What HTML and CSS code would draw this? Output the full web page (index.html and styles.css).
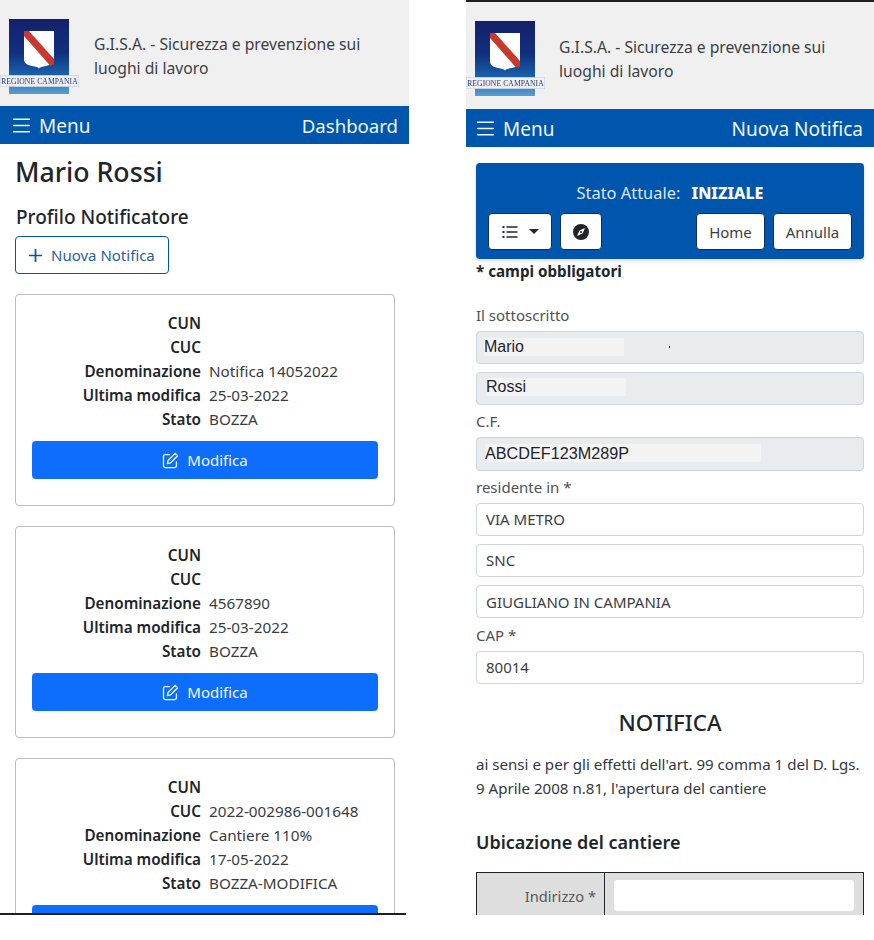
FILE: index.html
```html
<!DOCTYPE html>
<html lang="it">
<head>
<meta charset="utf-8">
<title>G.I.S.A.</title>
<link rel="stylesheet" href="styles.css">
</head>
<body>
<svg class="defs" width="0" height="0" aria-hidden="true">
  <defs>
    <linearGradient id="sky" x1="0" y1="0" x2="0" y2="1">
      <stop offset="0" stop-color="#15206a"/>
      <stop offset="0.45" stop-color="#11307f"/>
      <stop offset="0.75" stop-color="#1a62ad"/>
      <stop offset="1" stop-color="#5a9fce"/>
    </linearGradient>
    <symbol id="logo" viewBox="0 0 80 76">
      <rect x="9" y="0" width="60" height="75" fill="url(#sky)"/>
      <path d="M24 12H54V40C54 44 51 46 46 47C42 47.500 40 48 39 49.500C38 48 36 47.500 32 47C27 46 24 44 24 40Z" fill="#fff"/>
      <path d="M24 12H29L54 40V45.500L50 46.500L24 17Z" fill="#c8382f"/>
      <rect x="0.300" y="56.300" width="78.400" height="11.400" fill="#eef0f5" stroke="#c8d0de" stroke-width="0.600"/>
      <text x="39.500" y="64.800" text-anchor="middle" class="logo-text">REGIONE CAMPANIA</text>
    </symbol>
    <symbol id="menu-ic" viewBox="0 0 16 16">
      <path fill="currentColor" fill-rule="evenodd" d="M2.5 12a.5.5 0 0 1 .5-.5h10a.5.5 0 0 1 0 1H3a.5.5 0 0 1-.5-.5zm0-4a.5.5 0 0 1 .5-.5h10a.5.5 0 0 1 0 1H3a.5.5 0 0 1-.5-.5zm0-4a.5.5 0 0 1 .5-.5h10a.5.5 0 0 1 0 1H3a.5.5 0 0 1-.5-.5z"/>
    </symbol>
    <symbol id="edit-ic" viewBox="0 0 16 16">
      <path fill="none" stroke="currentColor" stroke-width="1.200" stroke-linecap="round" d="M13.600 9.200V13A1.600 1.600 0 0 1 12 14.600H3A1.600 1.600 0 0 1 1.400 13V4A1.600 1.600 0 0 1 3 2.400H7.200"/>
      <path fill="none" stroke="currentColor" stroke-width="1.200" stroke-linejoin="round" d="M12.400 1.300L14.700 3.600L8 10.300L5 11L5.700 8Z"/>
    </symbol>
  </defs>
</svg>

<main class="screen screen-left">
  <header class="brand">
    <svg class="logo"><use href="#logo"/></svg>
    <p class="brand-title">G.I.S.A. - Sicurezza e prevenzione sui luoghi di lavoro</p>
  </header>
  <nav class="navbar">
    <span class="nav-menu"><svg class="nav-icon"><use href="#menu-ic"/></svg>Menu</span>
    <span class="nav-title">Dashboard</span>
  </nav>
  <section class="dashboard">
    <h1 class="user-name">Mario Rossi</h1>
    <h2 class="profile">Profilo Notificatore</h2>
    <button class="btn-new" type="button">
      <svg class="plus" viewBox="0 0 12 12"><path d="M6 0V12M0 6H12" stroke="currentColor" stroke-width="1.600" fill="none"/></svg>
      Nuova Notifica
    </button>

    <article class="card">
      <dl class="facts">
        <dt>CUN</dt><dd></dd>
        <dt>CUC</dt><dd></dd>
        <dt>Denominazione</dt><dd>Notifica 14052022</dd>
        <dt>Ultima modifica</dt><dd>25-03-2022</dd>
        <dt>Stato</dt><dd>BOZZA</dd>
      </dl>
      <button class="btn-edit" type="button"><svg class="edit-icon"><use href="#edit-ic"/></svg>Modifica</button>
    </article>

    <article class="card">
      <dl class="facts">
        <dt>CUN</dt><dd></dd>
        <dt>CUC</dt><dd></dd>
        <dt>Denominazione</dt><dd>4567890</dd>
        <dt>Ultima modifica</dt><dd>25-03-2022</dd>
        <dt>Stato</dt><dd>BOZZA</dd>
      </dl>
      <button class="btn-edit" type="button"><svg class="edit-icon"><use href="#edit-ic"/></svg>Modifica</button>
    </article>

    <article class="card">
      <dl class="facts">
        <dt>CUN</dt><dd></dd>
        <dt>CUC</dt><dd>2022-002986-001648</dd>
        <dt>Denominazione</dt><dd>Cantiere 110%</dd>
        <dt>Ultima modifica</dt><dd>17-05-2022</dd>
        <dt>Stato</dt><dd>BOZZA-MODIFICA</dd>
      </dl>
      <button class="btn-edit" type="button" aria-label="Modifica"></button>
    </article>
  </section>
</main>

<main class="screen screen-right">
  <header class="brand">
    <svg class="logo"><use href="#logo"/></svg>
    <p class="brand-title">G.I.S.A. - Sicurezza e prevenzione sui luoghi di lavoro</p>
  </header>
  <nav class="navbar">
    <span class="nav-menu"><svg class="nav-icon"><use href="#menu-ic"/></svg>Menu</span>
    <span class="nav-title">Nuova Notifica</span>
  </nav>
  <section class="form">
    <div class="status">
      <p class="status-line">Stato Attuale: <strong>INIZIALE</strong></p>
      <div class="status-tools">
        <button class="tool tool-list" type="button" aria-label="Elenco">
          <svg class="tool-icon" viewBox="0 0 16 16"><path fill="currentColor" d="M4.500 2.300H15.500V3.700H4.500zM4.500 7.300H15.500V8.700H4.500zM4.500 12.300H15.500V13.700H4.500zM0.500 2H2.500V4H0.500zM0.500 7H2.500V9H0.500zM0.500 12H2.500V14H0.500z"/></svg>
          <span class="caret"></span>
        </button>
        <button class="tool tool-compass" type="button" aria-label="Bussola">
          <svg class="tool-icon" viewBox="0 0 16 16"><path fill="currentColor" fill-rule="evenodd" d="M16 8A8 8 0 1 1 0 8a8 8 0 0 1 16 0zM12 4L6.500 6.500L4 12L9.500 9.500Z"/><circle cx="8" cy="8" r="1" fill="currentColor"/></svg>
        </button>
        <button class="tool tool-home" type="button">Home</button>
        <button class="tool tool-cancel" type="button">Annulla</button>
      </div>
    </div>
    <p class="required">* campi obbligatori</p>

    <label class="lab lab-first">Il sottoscritto</label>
    <div class="field filled"><span class="mask mask-a">Mario</span><span class="dot"></span></div>
    <div class="field filled field-gap"><span class="mask mask-b">Rossi</span></div>
    <label class="lab lab-cf">C.F.</label>
    <div class="field filled field-cf"><span class="mask mask-c">ABCDEF123M289P</span></div>
    <label class="lab lab-res">residente in *</label>
    <div class="field">VIA METRO</div>
    <div class="field field-gap">SNC</div>
    <div class="field field-gap field-low">GIUGLIANO IN CAMPANIA</div>
    <label class="lab lab-cap">CAP *</label>
    <div class="field">80014</div>

    <h2 class="notice-title">NOTIFICA</h2>
    <p class="notice-text">ai sensi e per gli effetti dell'art. 99 comma 1 del D. Lgs. 9 Aprile 2008 n.81, l'apertura del cantiere</p>
    <h3 class="site-title">Ubicazione del cantiere</h3>
    <div class="site-row">
      <div class="site-label">Indirizzo *</div>
      <div class="site-cell"><div class="site-input"></div></div>
    </div>
  </section>
</main>
</body>
</html>
```
FILE: styles.css
```css
* { box-sizing: border-box; }
html, body { margin: 0; padding: 0; background: #fff; }
body {
  width: 874px;
  height: 940px;
  overflow: hidden;
  display: flex;
  align-items: flex-start;
  font-family: "Noto Sans", "Open Sans", sans-serif;
  font-size: 15px;
  line-height: 24px;
  color: #212529;
}
.defs { position: absolute; }
p, h1, h2, h3, dl, dd { margin: 0; }
button { font: inherit; cursor: pointer; }

.screen { overflow: hidden; flex: none; }
.screen-left {
  width: 409px;
  height: 915px;
  margin-right: 57px;
  position: relative;
}
.screen-left::after {
  content: "";
  position: absolute;
  left: 0; right: 3px; bottom: 0;
  height: 2px;
  background: #1f1f1f;
}
.screen-right {
  width: 408px;
  height: 915px;
  border-top: 2px solid #1f1f1f;
}

.brand {
  display: flex;
  align-items: center;
  background: #f0f0f0;
  height: 106px;
  padding: 0 20px 0 0;
}
.screen-right .brand { height: 107px; }
.logo { width: 80px; height: 76px; flex: none; margin-top: 7px; filter: blur(0.5px); }
.logo-text { font: 400 7.600px "Liberation Serif", serif; fill: #2c3a6e; letter-spacing: 0.100px; }
.brand-title { margin-left: 14px; margin-top: 5px; color: #3b3f44; font-size: 15.700px; }
.screen-right .brand-title { margin-left: 13px; margin-top: 7px; }

.navbar {
  display: flex;
  justify-content: space-between;
  align-items: center;
  height: 38px;
  padding: 2px 11px 0 9px;
  background: #0056ac;
  color: #f1f7fd;
  font-size: 19px;
}
.screen-right .navbar { padding-left: 7px; }
.screen-left .nav-title { font-size: 18.600px; }
.nav-menu { display: flex; align-items: center; gap: 5px; }
.nav-icon { width: 25px; height: 25px; margin-top: -1px; }

.dashboard { padding: 0 15px; }
.user-name { font-size: 26.700px; font-weight: 500; line-height: 32px; margin: 12px 0 0; }
.profile { font-size: 19px; font-weight: 500; line-height: 24px; margin: 17px 0 7px 1px; }
.btn-new {
  display: flex;
  align-items: center;
  gap: 9px;
  width: 154px;
  height: 38px;
  padding: 0 0 0 13px;
  background: #fff;
  border: 1px solid #0056ac;
  border-radius: 4px;
  color: #2a619f;
  white-space: nowrap;
}
.plus { width: 13px; height: 13px; color: #0056ac; flex: none; }

.card {
  width: 380px;
  height: 212px;
  margin-top: 20px;
  padding: 16px 16px 0;
  border: 1px solid #bdbdbd;
  border-radius: 4px;
}
.facts {
  display: grid;
  grid-template-columns: 169px 1fr;
  column-gap: 8px;
  grid-auto-rows: 24px;
  font-size: 15.250px;
}
.facts dt { font-weight: 600; text-align: right; }
.facts dd { color: #383c41; }
.btn-edit {
  display: flex;
  align-items: center;
  justify-content: center;
  gap: 8px;
  width: 100%;
  height: 38px;
  margin-top: 10px;
  background: #0d6efd;
  color: #f4f8ff;
  border: 0;
  border-radius: 4px;
}
.edit-icon { width: 17px; height: 17px; }

.form { padding: 16px 10px 0; }
.status {
  height: 96px;
  padding: 18px 12px 0;
  background: #0056ac;
  border-radius: 4px;
  box-shadow: 0 2px 4px rgba(0, 0, 0, .15);
  color: #dbe8f5;
  font-size: 16.400px;
}
.status-line { text-align: center; }
.status-line strong { color: #fff; font-weight: 800; font-size: 16px; margin-left: 7px; }
.status-tools { display: flex; gap: 8px; margin-top: 8px; font-size: 15px; }
.tool {
  height: 37px;
  background: #fff;
  border: 1px solid #0c2f55;
  border-radius: 4px;
  color: #3a3e43;
  padding: 0;
  display: flex;
  align-items: center;
  justify-content: center;
}
.tool-list { width: 64px; gap: 11px; color: #212529; }
.tool-compass { width: 42px; color: #212529; }
.tool-home { width: 69px; margin-left: auto; }
.tool-cancel { width: 79px; }
.tool-icon { width: 16px; height: 16px; }
.caret {
  width: 0; height: 0;
  border-left: 5px solid transparent;
  border-right: 5px solid transparent;
  border-top: 5px solid #212529;
}

.required { font-weight: 700; font-size: 15.200px; line-height: 24px; }
.lab { display: block; line-height: 24px; color: #4c5157; }
.lab-first { margin-top: 20px; margin-bottom: 4px; }
.lab-cf { margin-top: 4px; margin-bottom: 4px; }
.lab-res { margin-top: 4px; margin-bottom: 4px; }
.lab-cap { margin-top: 5px; margin-bottom: 4px; }

.field {
  height: 33px;
  border: 1px solid #ced4da;
  border-radius: 4px;
  background: #fff;
  padding: 0 9px;
  line-height: 31px;
  color: #3a3e43;
  display: flex;
  align-items: center;
}
.field-gap { margin-top: 8px; }
.field-low { padding-top: 2px; }
.field-cf { height: 34px; }
.filled { background: #e9ecef; padding: 0; font-family: "Liberation Sans", Arial, sans-serif; font-size: 16px; color: #1f2327; }
.mask { background: #f3f3f3; display: block; height: 18px; line-height: 18px; }
.mask-a { width: 140px; margin-left: 7px; margin-bottom: 1px; }
.mask-b { width: 140px; margin-left: 9px; margin-bottom: 4px; }
.mask-c { width: 276px; margin-left: 8px; margin-bottom: 2px; font-size: 16.200px; }
.dot { width: 1px; height: 2px; background: #111; margin-left: 45px; margin-bottom: 2px; }

.notice-title { font-size: 22.300px; font-weight: 500; line-height: 28px; text-align: center; margin-top: 25px; }
.notice-text { line-height: 24px; margin-top: 15px; color: #33373c; font-size: 15.100px; }
.site-title { font-size: 18px; font-weight: 600; line-height: 24px; margin-top: 30px; }
.site-row {
  display: flex;
  height: 50px;
  margin-top: 18px;
  border: 1px solid #212529;
}
.site-label {
  width: 128px;
  background: #dedede;
  border-right: 1px solid #212529;
  text-align: right;
  padding: 11px 8px 0 0;
  color: #55595e;
  font-size: 14.700px;
}
.site-cell { flex: 1; background: #dedede; padding: 7px 9px 0; }
.site-input { height: 31px; background: #fff; border-radius: 4px; }
```
